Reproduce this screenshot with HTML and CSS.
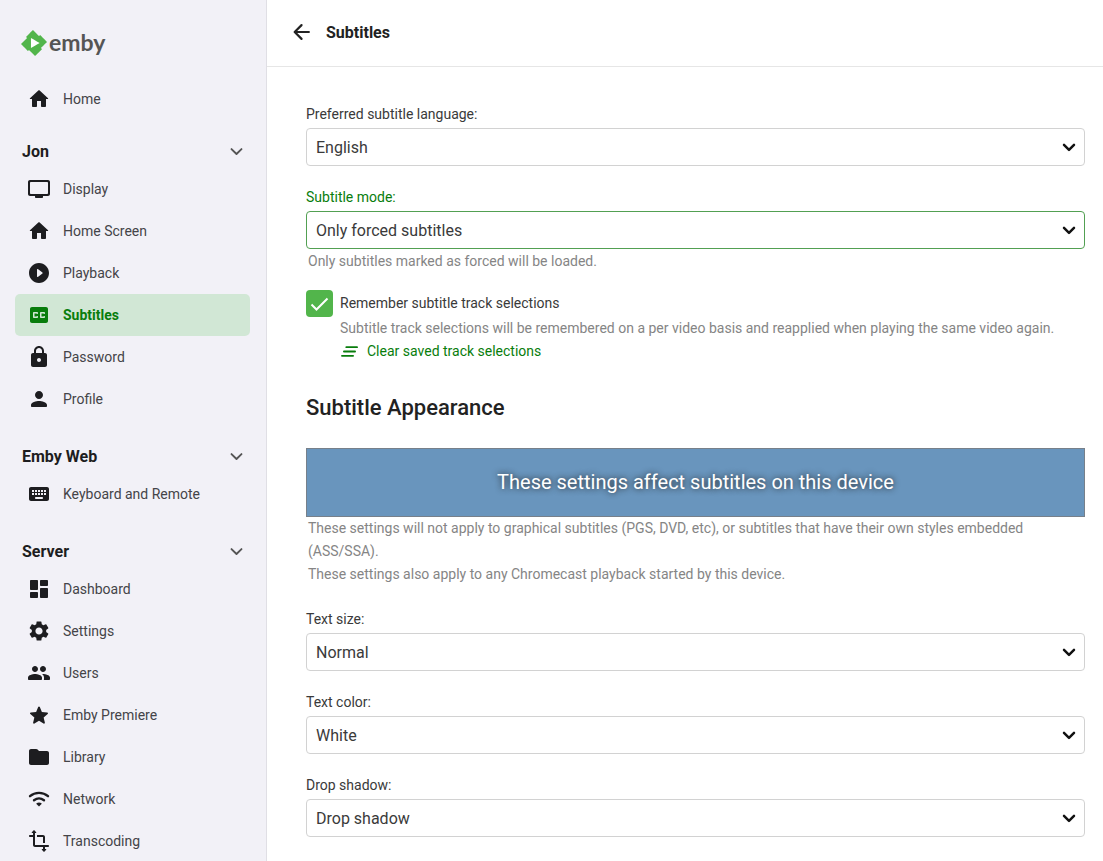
FILE: index.html
```html
<!DOCTYPE html>
<html lang="en">
<head>
<meta charset="utf-8">
<title>Subtitles</title>
<link rel="stylesheet" href="styles.css">
</head>
<body>
<svg class="sprite" aria-hidden="true">
  <symbol id="home" viewBox="0 0 24 24"><path d="M10 19v-5h4v5c0 .55.45 1 1 1h3c.55 0 1-.45 1-1v-7h1.700c.46 0 .68-.57.33-.87L12.670 3.600c-.38-.34-.96-.34-1.340 0l-8.360 7.530c-.34.300-.13.870.33.870H5v7c0 .55.45 1 1 1h3c.55 0 1-.45 1-1z"/></symbol>
  <symbol id="tv" viewBox="0 0 24 24"><path d="M21 3H3c-1.100 0-2 .9-2 2v12c0 1.100.9 2 2 2h5v1c0 .55.45 1 1 1h6c.55 0 1-.45 1-1v-1h5c1.100 0 1.990-.9 1.990-2L23 5c0-1.100-.9-2-2-2zm-1 14H4c-.55 0-1-.45-1-1V6c0-.55.45-1 1-1h16c.55 0 1 .45 1 1v10c0 .55-.45 1-1 1z"/></symbol>
  <symbol id="play" viewBox="0 0 24 24"><path d="M12 2C6.480 2 2 6.480 2 12s4.480 10 10 10 10-4.480 10-10S17.520 2 12 2zm-2 13.500v-7c0-.41.47-.65.8-.4l4.670 3.500c.27.2.27.6 0 .8l-4.670 3.500c-.33.250-.8.010-.8-.4z"/></symbol>
  <symbol id="cc" viewBox="0 0 24 24"><path d="M19 4H5c-1.110 0-2 .9-2 2v12c0 1.100.89 2 2 2h14c1.100 0 2-.9 2-2V6c0-1.100-.9-2-2-2zm-8 6.500c0 .28-.22.5-.5.5h-.5c-.28 0-.5-.22-.5-.5h-2v3h2c0-.28.22-.5.5-.5h.5c.28 0 .5.220.5.5v.5c0 .55-.45 1-1 1H7c-.55 0-1-.45-1-1v-4c0-.55.45-1 1-1h3c.55 0 1 .45 1 1v.5zm7 0c0 .28-.22.5-.5.5H17c-.28 0-.5-.22-.5-.5h-2v3h2c0-.28.22-.5.5-.5h.5c.28 0 .5.220.5.5v.5c0 .55-.45 1-1 1h-3c-.55 0-1-.45-1-1v-4c0-.55.45-1 1-1h3c.55 0 1 .45 1 1v.5z"/></symbol>
  <symbol id="lock" viewBox="0 0 24 24"><path d="M18 8h-1V6c0-2.760-2.240-5-5-5S7 3.240 7 6v2H6c-1.100 0-2 .9-2 2v10c0 1.100.9 2 2 2h12c1.100 0 2-.9 2-2V10c0-1.100-.9-2-2-2zm-6 9c-1.100 0-2-.9-2-2s.9-2 2-2 2 .9 2 2-.9 2-2 2zM9 8V6c0-1.660 1.340-3 3-3s3 1.340 3 3v2H9z"/></symbol>
  <symbol id="person" viewBox="0 0 24 24"><path d="M12 12c2.210 0 4-1.790 4-4s-1.790-4-4-4-4 1.790-4 4 1.790 4 4 4zm0 2c-2.670 0-8 1.340-8 4v1c0 .55.45 1 1 1h14c.55 0 1-.45 1-1v-1c0-2.660-5.330-4-8-4z"/></symbol>
  <symbol id="keyboard" viewBox="0 0 24 24"><path d="M20 5H4c-1.100 0-2 .9-2 2v10c0 1.100.9 2 2 2h16c1.100 0 2-.9 2-2V7c0-1.100-.9-2-2-2zm-9 3h2v2h-2V8zm0 3h2v2h-2v-2zM8 8h2v2H8V8zm0 3h2v2H8v-2zm-1 2H5v-2h2v2zm0-3H5V8h2v2zm8 7H9c-.55 0-1-.45-1-1s.45-1 1-1h6c.55 0 1 .45 1 1s-.45 1-1 1zm1-4h-2v-2h2v2zm0-3h-2V8h2v2zm3 3h-2v-2h2v2zm0-3h-2V8h2v2z"/></symbol>
  <symbol id="dashboard" viewBox="0 0 24 24"><path d="M4 13h6c.55 0 1-.45 1-1V4c0-.55-.45-1-1-1H4c-.55 0-1 .45-1 1v8c0 .55.45 1 1 1zm0 8h6c.55 0 1-.45 1-1v-4c0-.55-.45-1-1-1H4c-.55 0-1 .45-1 1v4c0 .55.45 1 1 1zm10 0h6c.55 0 1-.45 1-1v-8c0-.55-.45-1-1-1h-6c-.55 0-1 .45-1 1v8c0 .55.45 1 1 1zM13 4v4c0 .55.45 1 1 1h6c.55 0 1-.45 1-1V4c0-.55-.45-1-1-1h-6c-.55 0-1 .45-1 1z"/></symbol>
  <symbol id="settings" viewBox="0 0 24 24"><path d="M19.140 12.940c.04-.3.060-.61.060-.94 0-.32-.02-.64-.07-.94l2.030-1.580a.49.49 0 0 0 .12-.61l-1.920-3.320a.488.488 0 0 0-.59-.22l-2.390.96c-.5-.38-1.030-.7-1.620-.94l-.36-2.540a.484.484 0 0 0-.48-.41h-3.840c-.24 0-.43.170-.47.410l-.36 2.540c-.59.240-1.130.570-1.620.940l-2.390-.96c-.22-.08-.47 0-.59.220L2.740 8.870c-.12.210-.08.470.12.610l2.030 1.580c-.05.300-.09.630-.09.940s.02.640.070.940l-2.030 1.580a.49.49 0 0 0-.12.610l1.920 3.320c.12.220.37.290.59.220l2.390-.96c.5.380 1.030.7 1.620.940l.36 2.540c.05.240.24.410.48.410h3.840c.24 0 .44-.17.470-.41l.36-2.540c.59-.24 1.130-.56 1.620-.94l2.390.96c.22.080.47 0 .59-.22l1.920-3.320c.12-.22.070-.47-.12-.61l-2.010-1.580zM12 15.600c-1.980 0-3.600-1.620-3.600-3.600s1.620-3.600 3.600-3.600 3.600 1.620 3.600 3.600-1.620 3.600-3.600 3.600z"/></symbol>
  <symbol id="users" viewBox="0 0 24 24"><path d="M16 11c1.660 0 2.990-1.340 2.990-3S17.660 5 16 5s-3 1.340-3 3 1.340 3 3 3zm-8 0c1.660 0 2.990-1.340 2.990-3S9.660 5 8 5 5 6.340 5 8s1.340 3 3 3zm0 2c-2.330 0-7 1.170-7 3.500V18c0 .55.45 1 1 1h12c.55 0 1-.45 1-1v-1.500c0-2.330-4.670-3.500-7-3.500zm8 0c-.29 0-.62.020-.97.050 1.160.84 1.970 1.970 1.970 3.450V18c0 .35-.07.69-.18 1H22c.55 0 1-.45 1-1v-1.500c0-2.330-4.670-3.500-7-3.500z"/></symbol>
  <symbol id="star" viewBox="0 0 24 24"><path d="M12 17.800l-4.550 2.750c-.76.460-1.500-.08-1.300-.95l1.210-5.150-4.020-3.480c-.68-.59-.38-1.480.5-1.550l5.280-.45 2.060-4.860c.34-.81 1.300-.81 1.640 0l2.060 4.860 5.280.45c.88.070 1.180.96.5 1.550l-4.020 3.480 1.210 5.150c.2.870-.54 1.410-1.300.95z"/></symbol>
  <symbol id="folder" viewBox="0 0 24 24"><path d="M10.590 4.590C10.210 4.210 9.700 4 9.170 4H4c-1.100 0-1.990.9-1.990 2L2 18c0 1.100.9 2 2 2h16c1.100 0 2-.9 2-2V8c0-1.100-.9-2-2-2h-8l-1.410-1.410z"/></symbol>
  <symbol id="wifi" viewBox="0 0 24 24"><path class="stroke bold" d="M3 9.200c5-4.400 13-4.400 18 0M7 13.300c3-2.300 7-2.300 10 0"/><path d="M12 19.500l-2.300-2.300c-.5-.5-.3-1 .2-1.300 1.200-.7 3-.7 4.200 0 .5.300.7.800.2 1.300z"/></symbol>
  <symbol id="transform" viewBox="0 0 24 24"><path d="M21 18c.55 0 1-.45 1-1s-.45-1-1-1H8V4h.8c.45 0 .67-.54.35-.85L7.350 1.350a.5.5 0 0 0-.7 0l-1.800 1.800c-.32.310-.1.850.35.850H6v2H3c-.55 0-1 .45-1 1s.45 1 1 1h3v8c0 1.100.9 2 2 2h8v2h-.8c-.45 0-.67.540-.35.850l1.800 1.800c.2.200.5.200.7 0l1.800-1.800c.32-.31.1-.85-.35-.85H18v-2h3zM10 8h6v6h2V8c0-1.100-.9-2-2-2h-6v2z"/></symbol>
  <symbol id="chevron" viewBox="0 0 24 24"><path class="stroke bold" d="M5.700 9l6.300 6.200L18.300 9"/></symbol>
  <symbol id="arrow" viewBox="0 0 24 24"><path class="stroke heavy" d="M6 9.500l6 6 6-6"/></symbol>
  <symbol id="back" viewBox="0 0 24 24"><path class="stroke bold" d="M19.500 12H4.500M11.500 4.500L4 12l7.500 7.500"/></symbol>
  <symbol id="clear" viewBox="0 0 24 24"><path class="stroke bold" d="M8 6.500h13.500M5 12h14M2.500 17.500h14"/></symbol>
</svg>

<div class="app">
  <nav class="sidebar" aria-label="Main">
    <a class="logo" href="#">
      <svg class="logo-mark" viewBox="0 0 24 24" aria-hidden="true"><path class="logo-play" d="M8 6h10v12H8z"/><path class="logo-shape" d="M11.041 0c-.007 0-1.456 1.430-3.219 3.176L4.615 6.352l.512.513.512.512-2.819 2.791L0 12.961l1.830 1.848c1.006 1.016 2.438 2.460 3.182 3.209l1.351 1.359.508-.496c.28-.273.515-.498.524-.498.008 0 1.266 1.264 2.794 2.808L12.970 24l.187-.182c.23-.225 5.007-4.950 5.717-5.656l.52-.516-.502-.513c-.276-.282-.5-.52-.496-.53.003-.009 1.264-1.260 2.802-2.783 1.538-1.522 2.800-2.776 2.803-2.785.005-.012-3.617-3.684-6.107-6.193L17.650 4.600l-.505.505c-.279.278-.517.501-.53.497-.013-.005-1.270-1.267-2.793-2.805A449.655 449.655 0 0 0 11.041 0zM9.223 7.367c.091.038 7.951 4.608 7.957 4.627.003.013-1.781 1.056-3.965 2.320a999.898 999.898 0 0 1-3.996 2.307c-.019.006-.026-1.266-.026-4.629 0-3.700.007-4.634.030-4.625z"/></svg>
      <span>emby</span>
    </a>
    <ul class="menu">
      <li><a class="item" href="#"><svg class="icon"><use href="#home"/></svg>Home</a></li>
    </ul>
    <button class="group" type="button">Jon<svg class="chevron"><use href="#chevron"/></svg></button>
    <ul class="menu section">
      <li><a class="item" href="#"><svg class="icon"><use href="#tv"/></svg>Display</a></li>
      <li><a class="item" href="#"><svg class="icon"><use href="#home"/></svg>Home Screen</a></li>
      <li><a class="item" href="#"><svg class="icon"><use href="#play"/></svg>Playback</a></li>
      <li><a class="item active" href="#" aria-current="page"><svg class="icon"><use href="#cc"/></svg>Subtitles</a></li>
      <li><a class="item" href="#"><svg class="icon"><use href="#lock"/></svg>Password</a></li>
      <li><a class="item" href="#"><svg class="icon"><use href="#person"/></svg>Profile</a></li>
    </ul>
    <button class="group" type="button">Emby Web<svg class="chevron"><use href="#chevron"/></svg></button>
    <ul class="menu section">
      <li><a class="item" href="#"><svg class="icon"><use href="#keyboard"/></svg>Keyboard and Remote</a></li>
    </ul>
    <button class="group" type="button">Server<svg class="chevron"><use href="#chevron"/></svg></button>
    <ul class="menu section">
      <li><a class="item" href="#"><svg class="icon"><use href="#dashboard"/></svg>Dashboard</a></li>
      <li><a class="item" href="#"><svg class="icon"><use href="#settings"/></svg>Settings</a></li>
      <li><a class="item" href="#"><svg class="icon"><use href="#users"/></svg>Users</a></li>
      <li><a class="item" href="#"><svg class="icon"><use href="#star"/></svg>Emby Premiere</a></li>
      <li><a class="item" href="#"><svg class="icon"><use href="#folder"/></svg>Library</a></li>
      <li><a class="item" href="#"><svg class="icon"><use href="#wifi"/></svg>Network</a></li>
      <li><a class="item" href="#"><svg class="icon"><use href="#transform"/></svg>Transcoding</a></li>
    </ul>
  </nav>

  <div class="page">
    <header class="topbar">
      <button class="back" type="button" aria-label="Back"><svg class="back-icon"><use href="#back"/></svg></button>
      <h1 class="title">Subtitles</h1>
    </header>
    <main class="content">
      <form class="form">
        <div class="field">
          <label class="label" for="language">Preferred subtitle language:</label>
          <div class="select-wrap"><select class="select" id="language"><option>English</option></select><svg class="select-arrow"><use href="#arrow"/></svg></div>
        </div>
        <div class="field focused">
          <label class="label" for="mode">Subtitle mode:</label>
          <div class="select-wrap"><select class="select" id="mode"><option>Only forced subtitles</option></select><svg class="select-arrow"><use href="#arrow"/></svg></div>
          <p class="hint">Only subtitles marked as forced will be loaded.</p>
        </div>
        <div class="remember">
          <span class="check"><input class="check-box" type="checkbox" id="remember" checked><svg class="check-mark" viewBox="0 0 27 27" aria-hidden="true"><path d="M5.500 14.500l5 5L21.500 8.500"/></svg></span>
          <label class="check-label" for="remember">Remember subtitle track selections</label>
          <div class="remember-more">
            <p class="note">Subtitle track selections will be remembered on a per video basis and reapplied when playing the same video again.</p>
            <a class="clear" href="#"><svg class="clear-icon"><use href="#clear"/></svg>Clear saved track selections</a>
          </div>
        </div>
        <h2 class="section-title">Subtitle Appearance</h2>
        <div class="preview">These settings affect subtitles on this device</div>
        <div class="preview-notes">
          <p class="hint">These settings will not apply to graphical subtitles (PGS, DVD, etc), or subtitles that have their own styles embedded (ASS/SSA).</p>
          <p class="hint">These settings also apply to any Chromecast playback started by this device.</p>
        </div>
        <div class="field">
          <label class="label" for="size">Text size:</label>
          <div class="select-wrap"><select class="select" id="size"><option>Normal</option></select><svg class="select-arrow"><use href="#arrow"/></svg></div>
        </div>
        <div class="field">
          <label class="label" for="color">Text color:</label>
          <div class="select-wrap"><select class="select" id="color"><option>White</option></select><svg class="select-arrow"><use href="#arrow"/></svg></div>
        </div>
        <div class="field">
          <label class="label" for="shadow">Drop shadow:</label>
          <div class="select-wrap"><select class="select" id="shadow"><option>Drop shadow</option></select><svg class="select-arrow"><use href="#arrow"/></svg></div>
        </div>
      </form>
    </main>
  </div>
</div>
</body>
</html>
```

FILE: styles.css
```css
* { box-sizing: border-box; }

body {
  margin: 0;
  font-family: Roboto, "Liberation Sans", sans-serif;
  font-size: 14px;
  line-height: 23px;
  color: #3a3a3a;
  background: #fff;
}

h1, h2, p, ul { margin: 0; padding: 0; }
ul { list-style: none; }
a { text-decoration: none; color: inherit; }
button { border: 0; padding: 0; background: none; font: inherit; color: inherit; cursor: pointer; }
svg { display: block; flex: none; fill: currentColor; }
.sprite { position: absolute; width: 0; height: 0; }
.stroke { fill: none; stroke: currentColor; stroke-linecap: round; stroke-linejoin: round; }
.bold { stroke-width: 2.4; }
.heavy { stroke-width: 3; }

.app { display: flex; height: 100vh; }

.sidebar {
  flex: 0 0 267px;
  padding: 29px 16px 0 15px;
  overflow-y: auto;
  scrollbar-width: none;
  background: #f2f1f7;
  border-right: 1px solid #e0dfe5;
}

.logo {
  display: flex;
  align-items: center;
  gap: 2px;
  height: 28px;
  padding-left: 6px;
  margin-bottom: 21px;
  font-family: Lato, sans-serif;
  font-size: 23px;
  font-weight: 700;
  line-height: 24px;
  color: #555;
}
.logo span { padding-bottom: 3px; }
.logo-mark { width: 26px; height: 26px; }
.logo-shape { fill: #52b54b; }
.logo-play { fill: #fff; }

.item {
  display: flex;
  align-items: center;
  gap: 12px;
  height: 42px;
  padding-left: 12px;
  border-radius: 5px;
  color: #444448;
}
.icon { width: 24px; height: 24px; color: #1d1d20; }
.item.active { background: #d1e7d5; color: #087d0c; font-weight: 700; }
.item.active .icon { color: #087d0c; }
.section { margin-bottom: 19px; }

.group {
  display: flex;
  align-items: center;
  justify-content: space-between;
  width: 100%;
  height: 34px;
  margin-top: 14px;
  padding: 0 4px 0 7px;
  font-size: 16px;
  font-weight: 700;
  color: #1d1d20;
}
.section + .group { margin-top: 0; }
.chevron { width: 19px; height: 19px; color: #555; }

.page { flex: 1; min-width: 0; display: flex; flex-direction: column; }
.topbar {
  display: flex;
  align-items: center;
  gap: 13px;
  flex: 0 0 67px;
  padding: 0 24px 2px;
  border-bottom: 1px solid #e6e6e6;
}
.back-icon { width: 22px; height: 22px; color: #222; }
.title { font-size: 16px; font-weight: 700; color: #222; }

.content { flex: 1; overflow-y: auto; scrollbar-width: none; padding: 37px 18px 20px 39px; }
.form { display: flex; flex-direction: column; }

.field { margin-bottom: 21px; }
.label { display: block; margin-bottom: 4px; line-height: 20px; }
.select-wrap { display: grid; align-items: center; }
.select-wrap > * { grid-area: 1 / 1; }
.select {
  appearance: none;
  width: 100%;
  height: 38px;
  padding: 0 36px 0 9px;
  border: 1px solid #d2d2d2;
  border-radius: 4px;
  background: #fff;
  font: inherit;
  font-size: 16px;
  color: #3a3a3a;
}
.select-arrow { justify-self: end; width: 20px; height: 20px; margin-right: 6px; pointer-events: none; color: #111; }
.focused { margin-bottom: 17px; }
.focused .label { color: #087d0c; }
.focused .select { border-color: #52a052; }
.focused .hint { margin-top: 1px; }
.hint { padding: 0 2px; color: #858585; }

.remember {
  display: grid;
  grid-template-columns: 27px 1fr;
  column-gap: 7px;
  align-items: center;
}
.check { display: grid; }
.check > * { grid-area: 1 / 1; }
.check-box { appearance: none; width: 27px; height: 27px; margin: 0; border-radius: 4px; background: #52b54b; }
.check-mark { width: 27px; height: 27px; fill: none; stroke: #fff; stroke-width: 2; pointer-events: none; }
.remember-more { grid-column: 2; }
.note { color: #858585; }
.clear { display: inline-flex; align-items: center; gap: 8px; color: #087d0c; }
.clear-icon { width: 19px; height: 19px; }

.section-title { margin: 25px 0; font-size: 22px; font-weight: 500; line-height: 30px; color: #222; }
.preview {
  padding: 20px;
  border: 1px solid #77808a;
  background: #6995bd;
  font-size: 20px;
  line-height: 27px;
  text-align: center;
  color: #fff;
  text-shadow: 0 0 6px #222;
}
.preview-notes { margin-bottom: 23px; }
```
